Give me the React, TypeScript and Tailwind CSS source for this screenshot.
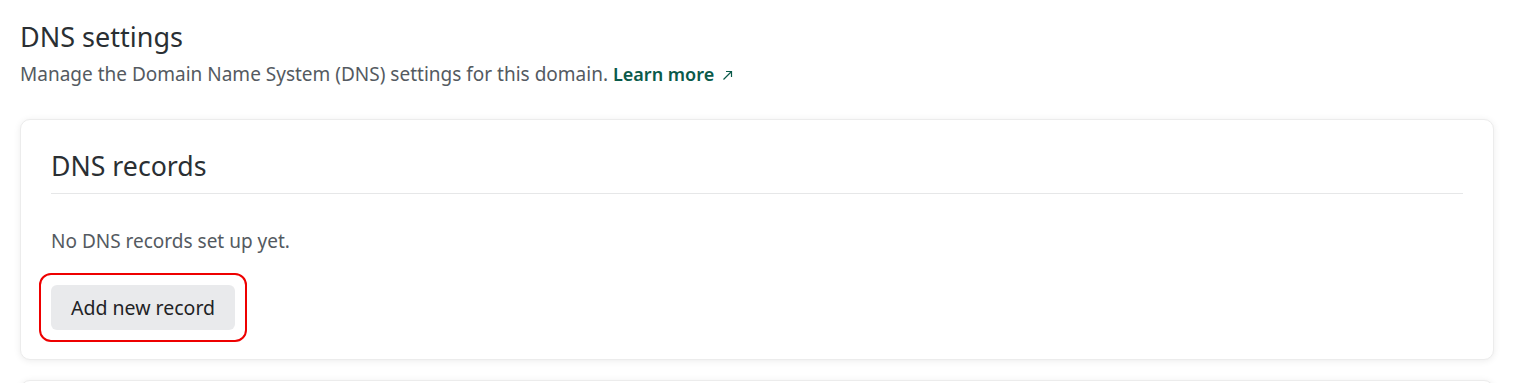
export default function App() {
  return (
    <div className="min-h-[383px] bg-white pl-5 pr-[30px] pt-[19px] font-['Noto_Sans',sans-serif] text-[#2d3338]">
      <h2 className="text-[27px] leading-[36px] font-normal text-[#2a2f33]">DNS settings</h2>
      <p className="mt-[5px] text-[19px] leading-[28px] text-[#545a61]">
        Manage the Domain Name System (DNS) settings for this domain.{' '}
        <a href="#" className="text-[18px] font-semibold text-[#0a5a4a]">
          Learn more
        </a>
        <span className="ml-[8px] inline-block align-middle text-[#0a5a4a]">
          <svg width="11" height="11" viewBox="0 0 11 11" fill="none" stroke="currentColor" strokeWidth="1.2">
            <path d="M1.5 9.5 L9.5 1.5 M4 1.5 H9.5 V7" />
          </svg>
        </span>
      </p>

      <section className="mt-[31px] rounded-[10px] border border-[#ececec] bg-white px-[30px] pt-[27px] pb-[17px] shadow-[0_1px_7px_rgba(0,0,0,0.08)]">
        <div className="border-b border-[#e6e7e8] pb-[8px]">
          <h3 className="text-[26.7px] leading-[38px] text-[#2a2f33]">DNS records</h3>
        </div>
        <p className="mt-[33px] text-[19px] leading-[28px] text-[#545a61]">No DNS records set up yet.</p>
        <div className="mt-[18px] -ml-[12px] inline-block rounded-[12px] border-2 border-[#ee0000] p-[10px]">
          <button className="h-[45px] rounded-[6px] bg-[#e9eaec] px-5 text-[19.5px] text-[#1f2326]">
            Add new record
          </button>
        </div>
      </section>

      <section className="mt-[20px] h-[40px] rounded-[10px] border border-[#ececec] bg-white shadow-[0_1px_7px_rgba(0,0,0,0.08)]" />
    </div>
  );
}
